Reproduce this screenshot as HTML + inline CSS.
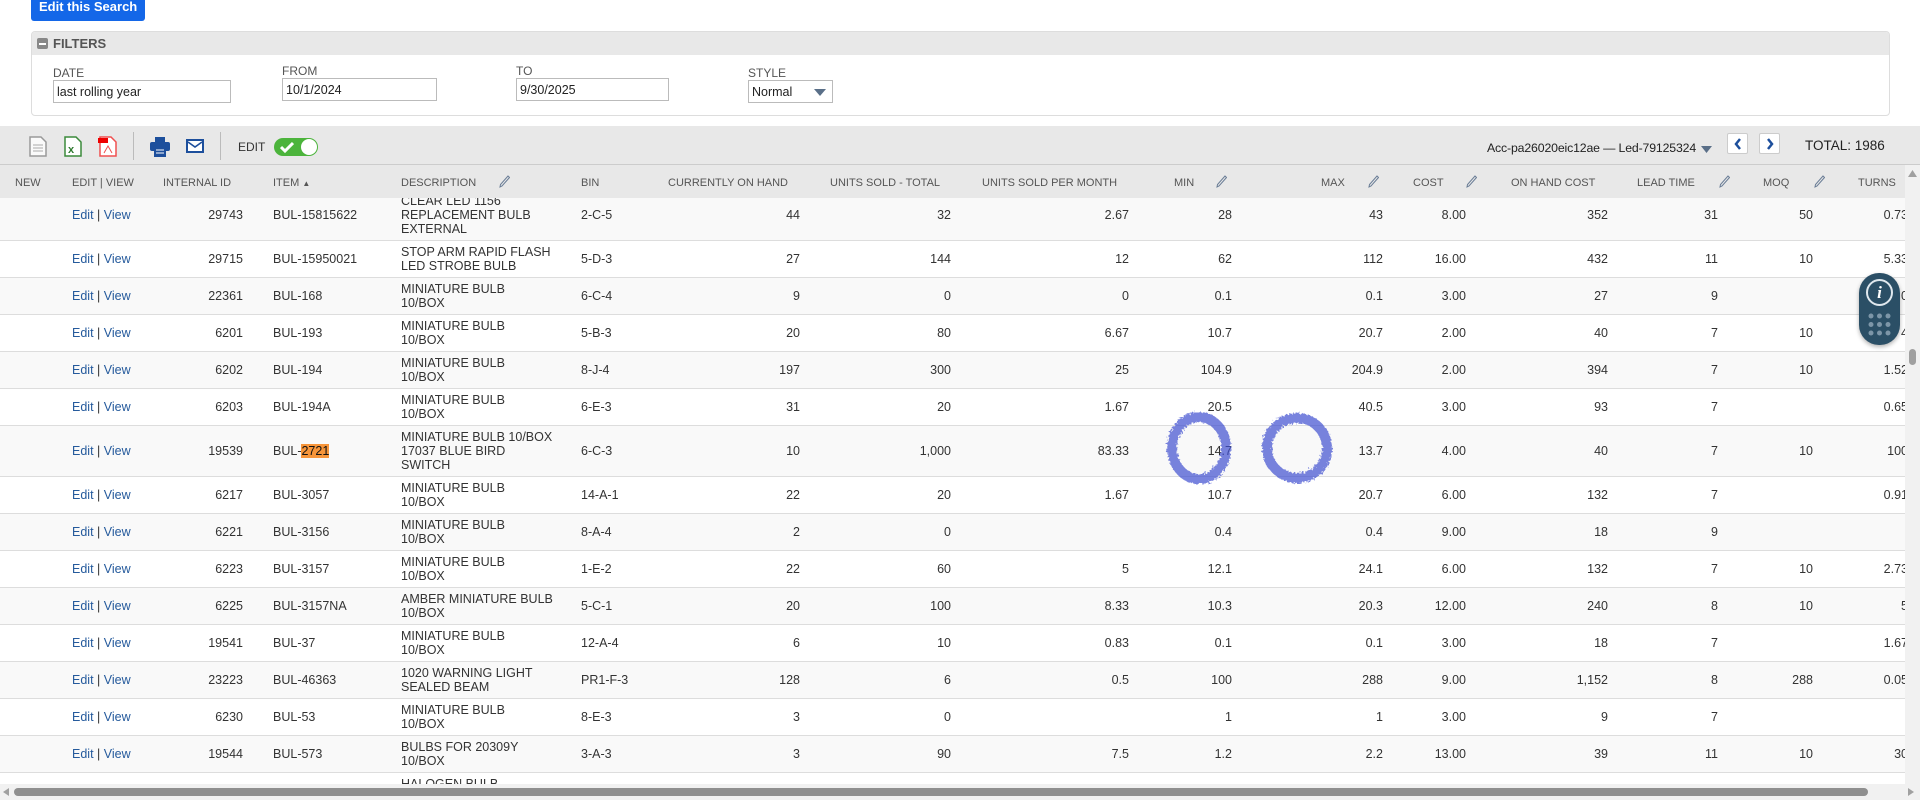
<!DOCTYPE html>
<html><head><meta charset="utf-8">
<style>
*{box-sizing:border-box;margin:0;padding:0}
body{width:1920px;height:800px;overflow:hidden;background:#fff;font-family:"Liberation Sans",Arial,sans-serif;color:#333;position:relative}
.abs{position:absolute}
#btn{left:31px;top:0;width:114px;height:21px;background:#1467e8;color:#fff;font-weight:bold;font-size:13px;line-height:14px;padding-left:8px;border-radius:0 0 3px 3px}
#filt{left:31px;top:31px;width:1859px;height:85px;border:1px solid #ddd;border-radius:4px;overflow:hidden}
#fh{height:23px;background:#e8e8e8;font-size:13px;font-weight:bold;color:#555;padding:4px 0 0 21px;position:relative}
#fh i{position:absolute;left:5px;top:6px;width:11px;height:11px;background:#888;border-radius:2px}
#fh i:after{content:"";position:absolute;left:2px;top:5px;width:7px;height:1.5px;background:#fff}
.lbl{font-size:12px;color:#555}
.inp{border:1px solid #bbb;height:23px;font-size:12.5px;padding:4px 3px;color:#222}
#tb{left:0;top:126px;width:1920px;height:39px;background:#e8e8e8;border-bottom:1px solid #ccc}
#hd{left:0;top:165px;width:1905px;height:33px;background:#e8e8e8;font-size:11px;color:#555}
#hd span{position:absolute;top:12px}
.pen{position:absolute;top:10px}
#body{left:0;top:198px;width:1905px;height:586px;overflow:hidden}
table{position:absolute;top:-8px;left:0;border-collapse:collapse;table-layout:fixed;width:1918px;font-size:12.5px}
td{padding:4px 12px;line-height:14px;border-bottom:1px solid #ddd;vertical-align:middle;white-space:nowrap;overflow:hidden}
tr:nth-child(odd) td{background:#f9f9f9}
td.r{text-align:right}
td.t{text-align:right;padding-right:10px}
a{color:#255a9c;text-decoration:none}
#vs{left:1905px;top:165px;width:15px;height:620px;background:#f1f1f1}
#hs{left:0;top:784px;width:1920px;height:16px;background:#f1f1f1}
</style></head><body>
<div id="btn" class="abs">Edit this Search</div>
<div id="filt" class="abs"><div id="fh"><i></i>FILTERS</div></div>
<div class="abs lbl" style="left:53px;top:66px">DATE</div>
<div class="abs inp" style="left:53px;top:80px;width:178px">last rolling year</div>
<div class="abs lbl" style="left:282px;top:64px">FROM</div>
<div class="abs inp" style="left:282px;top:78px;width:155px">10/1/2024</div>
<div class="abs lbl" style="left:516px;top:64px">TO</div>
<div class="abs inp" style="left:516px;top:78px;width:153px">9/30/2025</div>
<div class="abs lbl" style="left:748px;top:66px">STYLE</div>
<div class="abs inp" style="left:748px;top:80px;width:85px">Normal<svg style="position:absolute;right:6px;top:8px" width="12" height="7"><path d="M0 0H12L6 7Z" fill="#5a6f88"/></svg></div>

<div id="tb" class="abs">
<svg class="abs" style="left:29px;top:10px" width="18" height="21"><path d="M1 1H12L17 6V20H1Z" fill="#fafafa" stroke="#999" stroke-width="1.5"/><path d="M4 9H14M4 12H14M4 15H14" stroke="#aaa"/></svg>
<svg class="abs" style="left:64px;top:10px" width="18" height="21"><path d="M1 1H12L17 6V20H1Z" fill="#fff" stroke="#3b8a3b" stroke-width="1.5"/><text x="4" y="17" font-size="11" font-weight="bold" fill="#2f7a2f" font-family="Liberation Sans">x</text></svg>
<svg class="abs" style="left:98px;top:10px" width="19" height="21"><path d="M2 1H13L18 6V20H2Z" fill="#fff" stroke="#f05050" stroke-width="1.5"/><rect x="0" y="2" width="10" height="5" fill="#e00"/><path d="M6 17L10 10L14 17" stroke="#f05050" fill="none"/></svg>
<div class="abs" style="left:133px;top:6px;width:1px;height:28px;background:#bbb"></div>
<svg class="abs" style="left:150px;top:11px" width="20" height="20"><rect x="5" y="0" width="10" height="6" fill="#1d4f9c"/><rect x="0" y="5" width="20" height="9" rx="2" fill="#1d4f9c"/><rect x="4" y="10" width="12" height="10" fill="#1d4f9c"/><path d="M6 13H14M6 16H14" stroke="#fff"/></svg>
<svg class="abs" style="left:186px;top:13px" width="18" height="15"><rect x="1" y="1" width="16" height="12" fill="#fff" stroke="#1d4f9c" stroke-width="2"/><path d="M2 3L9 8L16 3" stroke="#1d4f9c" stroke-width="1.6" fill="none"/></svg>
<div class="abs" style="left:220px;top:6px;width:1px;height:28px;background:#bbb"></div>
<div class="abs" style="left:238px;top:14px;font-size:12px;color:#333">EDIT</div>
<div class="abs" style="left:274px;top:12px;width:44px;height:18px;border-radius:9px;background:#4cb43c"><svg class="abs" style="left:6px;top:3px" width="14" height="12"><path d="M1 6L5 10L13 2" stroke="#fff" stroke-width="3" fill="none"/></svg><div class="abs" style="right:1px;top:1px;width:16px;height:16px;border-radius:8px;background:#fff"></div></div>
<div class="abs" style="left:1487px;top:15px;font-size:12.3px;color:#222;white-space:nowrap;letter-spacing:-0.15px">Acc-pa26020eic12ae — Led-79125324</div>
<svg class="abs" style="left:1701px;top:20px" width="11" height="7"><path d="M0 0H11L5.5 7Z" fill="#5a6f88"/></svg>
<div class="abs" style="left:1727px;top:7px;width:21px;height:21px;background:#fff;border:1px solid #ccc;border-radius:2px"><svg class="abs" style="left:6px;top:4px" width="8" height="12"><path d="M6 1L2 6L6 11" stroke="#1d4f9c" stroke-width="2.5" fill="none"/></svg></div>
<div class="abs" style="left:1759px;top:7px;width:21px;height:21px;background:#fff;border:1px solid #ccc;border-radius:2px"><svg class="abs" style="left:6px;top:4px" width="8" height="12"><path d="M2 1L6 6L2 11" stroke="#1d4f9c" stroke-width="2.5" fill="none"/></svg></div>
<div class="abs" style="left:1805px;top:12px;font-size:13.5px;color:#222">TOTAL: 1986</div>
</div>

<div id="hd" class="abs">
<span style="left:15px">NEW</span><span style="left:72px">EDIT | VIEW</span><span style="left:163px">INTERNAL ID</span><span style="left:273px">ITEM <small style="font-size:8px">▲</small></span><span style="left:401px">DESCRIPTION</span><span style="left:581px">BIN</span><span style="left:668px">CURRENTLY ON HAND</span><span style="left:830px">UNITS SOLD - TOTAL</span><span style="left:982px">UNITS SOLD PER MONTH</span><span style="left:1174px">MIN</span><span style="left:1321px">MAX</span><span style="left:1413px">COST</span><span style="left:1511px">ON HAND COST</span><span style="left:1637px">LEAD TIME</span><span style="left:1763px">MOQ</span><span style="left:1858px">TURNS</span>
<svg class="pen" style="left:499px" width="11" height="13"><path d="M9 1L10.5 2.5L3 11L1 12L1.5 9.5Z" stroke="#6a7d96" fill="none"/></svg>
<svg class="pen" style="left:1216px" width="11" height="13"><path d="M9 1L10.5 2.5L3 11L1 12L1.5 9.5Z" stroke="#6a7d96" fill="none"/></svg>
<svg class="pen" style="left:1368px" width="11" height="13"><path d="M9 1L10.5 2.5L3 11L1 12L1.5 9.5Z" stroke="#6a7d96" fill="none"/></svg>
<svg class="pen" style="left:1466px" width="11" height="13"><path d="M9 1L10.5 2.5L3 11L1 12L1.5 9.5Z" stroke="#6a7d96" fill="none"/></svg>
<svg class="pen" style="left:1719px" width="11" height="13"><path d="M9 1L10.5 2.5L3 11L1 12L1.5 9.5Z" stroke="#6a7d96" fill="none"/></svg>
<svg class="pen" style="left:1814px" width="11" height="13"><path d="M9 1L10.5 2.5L3 11L1 12L1.5 9.5Z" stroke="#6a7d96" fill="none"/></svg>
</div>

<div id="body" class="abs">
<table>
<colgroup><col style="width:60px"><col style="width:91px"><col style="width:110px"><col style="width:128px"><col style="width:180px"><col style="width:86px"><col style="width:157px"><col style="width:151px"><col style="width:178px"><col style="width:103px"><col style="width:151px"><col style="width:83px"><col style="width:142px"><col style="width:110px"><col style="width:95px"><col style="width:93px"></colgroup>
<tr><td></td><td><a>Edit</a> | <a>View</a></td><td class="r" style="padding-right:18px">29743</td><td>BUL-15815622</td><td>CLEAR LED 1156<br>REPLACEMENT BULB<br>EXTERNAL</td><td>2-C-5</td><td class="r">44</td><td class="r">32</td><td class="r">2.67</td><td class="r">28</td><td class="r">43</td><td class="r">8.00</td><td class="r">352</td><td class="r">31</td><td class="r">50</td><td class="t">0.73</td></tr>
<tr><td></td><td><a>Edit</a> | <a>View</a></td><td class="r" style="padding-right:18px">29715</td><td>BUL-15950021</td><td>STOP ARM RAPID FLASH<br>LED STROBE BULB</td><td>5-D-3</td><td class="r">27</td><td class="r">144</td><td class="r">12</td><td class="r">62</td><td class="r">112</td><td class="r">16.00</td><td class="r">432</td><td class="r">11</td><td class="r">10</td><td class="t">5.33</td></tr>
<tr><td></td><td><a>Edit</a> | <a>View</a></td><td class="r" style="padding-right:18px">22361</td><td>BUL-168</td><td>MINIATURE BULB<br>10/BOX</td><td>6-C-4</td><td class="r">9</td><td class="r">0</td><td class="r">0</td><td class="r">0.1</td><td class="r">0.1</td><td class="r">3.00</td><td class="r">27</td><td class="r">9</td><td class="r"></td><td class="t">0</td></tr>
<tr><td></td><td><a>Edit</a> | <a>View</a></td><td class="r" style="padding-right:18px">6201</td><td>BUL-193</td><td>MINIATURE BULB<br>10/BOX</td><td>5-B-3</td><td class="r">20</td><td class="r">80</td><td class="r">6.67</td><td class="r">10.7</td><td class="r">20.7</td><td class="r">2.00</td><td class="r">40</td><td class="r">7</td><td class="r">10</td><td class="t">4</td></tr>
<tr><td></td><td><a>Edit</a> | <a>View</a></td><td class="r" style="padding-right:18px">6202</td><td>BUL-194</td><td>MINIATURE BULB<br>10/BOX</td><td>8-J-4</td><td class="r">197</td><td class="r">300</td><td class="r">25</td><td class="r">104.9</td><td class="r">204.9</td><td class="r">2.00</td><td class="r">394</td><td class="r">7</td><td class="r">10</td><td class="t">1.52</td></tr>
<tr><td></td><td><a>Edit</a> | <a>View</a></td><td class="r" style="padding-right:18px">6203</td><td>BUL-194A</td><td>MINIATURE BULB<br>10/BOX</td><td>6-E-3</td><td class="r">31</td><td class="r">20</td><td class="r">1.67</td><td class="r">20.5</td><td class="r">40.5</td><td class="r">3.00</td><td class="r">93</td><td class="r">7</td><td class="r"></td><td class="t">0.65</td></tr>
<tr><td></td><td><a>Edit</a> | <a>View</a></td><td class="r" style="padding-right:18px">19539</td><td>BUL-<span style="background:#f7953a;color:#111">2721</span></td><td>MINIATURE BULB 10/BOX<br>17037 BLUE BIRD<br>SWITCH</td><td>6-C-3</td><td class="r">10</td><td class="r">1,000</td><td class="r">83.33</td><td class="r">14.7</td><td class="r">13.7</td><td class="r">4.00</td><td class="r">40</td><td class="r">7</td><td class="r">10</td><td class="t">100</td></tr>
<tr><td></td><td><a>Edit</a> | <a>View</a></td><td class="r" style="padding-right:18px">6217</td><td>BUL-3057</td><td>MINIATURE BULB<br>10/BOX</td><td>14-A-1</td><td class="r">22</td><td class="r">20</td><td class="r">1.67</td><td class="r">10.7</td><td class="r">20.7</td><td class="r">6.00</td><td class="r">132</td><td class="r">7</td><td class="r"></td><td class="t">0.91</td></tr>
<tr><td></td><td><a>Edit</a> | <a>View</a></td><td class="r" style="padding-right:18px">6221</td><td>BUL-3156</td><td>MINIATURE BULB<br>10/BOX</td><td>8-A-4</td><td class="r">2</td><td class="r">0</td><td class="r"></td><td class="r">0.4</td><td class="r">0.4</td><td class="r">9.00</td><td class="r">18</td><td class="r">9</td><td class="r"></td><td class="t"></td></tr>
<tr><td></td><td><a>Edit</a> | <a>View</a></td><td class="r" style="padding-right:18px">6223</td><td>BUL-3157</td><td>MINIATURE BULB<br>10/BOX</td><td>1-E-2</td><td class="r">22</td><td class="r">60</td><td class="r">5</td><td class="r">12.1</td><td class="r">24.1</td><td class="r">6.00</td><td class="r">132</td><td class="r">7</td><td class="r">10</td><td class="t">2.73</td></tr>
<tr><td></td><td><a>Edit</a> | <a>View</a></td><td class="r" style="padding-right:18px">6225</td><td>BUL-3157NA</td><td>AMBER MINIATURE BULB<br>10/BOX</td><td>5-C-1</td><td class="r">20</td><td class="r">100</td><td class="r">8.33</td><td class="r">10.3</td><td class="r">20.3</td><td class="r">12.00</td><td class="r">240</td><td class="r">8</td><td class="r">10</td><td class="t">5</td></tr>
<tr><td></td><td><a>Edit</a> | <a>View</a></td><td class="r" style="padding-right:18px">19541</td><td>BUL-37</td><td>MINIATURE BULB<br>10/BOX</td><td>12-A-4</td><td class="r">6</td><td class="r">10</td><td class="r">0.83</td><td class="r">0.1</td><td class="r">0.1</td><td class="r">3.00</td><td class="r">18</td><td class="r">7</td><td class="r"></td><td class="t">1.67</td></tr>
<tr><td></td><td><a>Edit</a> | <a>View</a></td><td class="r" style="padding-right:18px">23223</td><td>BUL-46363</td><td>1020 WARNING LIGHT<br>SEALED BEAM</td><td>PR1-F-3</td><td class="r">128</td><td class="r">6</td><td class="r">0.5</td><td class="r">100</td><td class="r">288</td><td class="r">9.00</td><td class="r">1,152</td><td class="r">8</td><td class="r">288</td><td class="t">0.05</td></tr>
<tr><td></td><td><a>Edit</a> | <a>View</a></td><td class="r" style="padding-right:18px">6230</td><td>BUL-53</td><td>MINIATURE BULB<br>10/BOX</td><td>8-E-3</td><td class="r">3</td><td class="r">0</td><td class="r"></td><td class="r">1</td><td class="r">1</td><td class="r">3.00</td><td class="r">9</td><td class="r">7</td><td class="r"></td><td class="t"></td></tr>
<tr><td></td><td><a>Edit</a> | <a>View</a></td><td class="r" style="padding-right:18px">19544</td><td>BUL-573</td><td>BULBS FOR 20309Y<br>10/BOX</td><td>3-A-3</td><td class="r">3</td><td class="r">90</td><td class="r">7.5</td><td class="r">1.2</td><td class="r">2.2</td><td class="r">13.00</td><td class="r">39</td><td class="r">11</td><td class="r">10</td><td class="t">30</td></tr>
<tr><td></td><td><a>Edit</a> | <a>View</a></td><td class="r" style="padding-right:18px">6343</td><td>BUL-906</td><td>HALOGEN BULB<br>10/BOX</td><td>15-A-6</td><td class="r">2</td><td class="r">1</td><td class="r">0.08</td><td class="r">1</td><td class="r">1</td><td class="r">4.00</td><td class="r">12</td><td class="r">7</td><td class="r"></td><td class="t">0.08</td></tr>
</table>
</div>

<svg class="abs" style="left:1160px;top:405px" width="180" height="90">
<defs><filter id="rough"><feTurbulence type="fractalNoise" baseFrequency="0.5" numOctaves="2" result="n"/><feDisplacementMap in="SourceGraphic" in2="n" scale="6"/></filter></defs>
<g fill="none" stroke="#3f4fd0" stroke-opacity="0.7" stroke-width="10" filter="url(#rough)">
<ellipse cx="39" cy="43" rx="27" ry="31"/>
<ellipse cx="137" cy="43" rx="30" ry="30"/>
</g></svg>

<div id="vs" class="abs"><svg class="abs" style="left:3px;top:5px" width="9" height="7"><path d="M0 7H9L4.5 0Z" fill="#a0a0a0"/></svg><div class="abs" style="left:4px;top:184px;width:7px;height:16px;border-radius:4px;background:#a0a0a0"></div></div>
<div id="hs" class="abs"><svg class="abs" style="left:3px;top:4px" width="6" height="8"><path d="M6 0V8L0 4Z" fill="#a0a0a0"/></svg><div class="abs" style="left:14px;top:4px;width:1854px;height:8px;border-radius:4px;background:#8f8f8f"></div><svg class="abs" style="left:1908px;top:4px" width="6" height="8"><path d="M0 0V8L6 4Z" fill="#a0a0a0"/></svg></div>

<div class="abs" style="left:1859px;top:273px;width:41px;height:72px;border-radius:20px;background:#2b4f66;box-shadow:0 2px 4px rgba(0,0,0,.3)">
<div class="abs" style="left:7px;top:6px;width:27px;height:27px;border:2px solid #e0e8ee;border-radius:50%;color:#fff;font-family:'Liberation Serif',serif;font-style:italic;font-weight:bold;font-size:17px;text-align:center;line-height:23px">i</div>
<svg class="abs" style="left:9px;top:40px" width="23" height="23" fill="#7d96a8"><circle cx="3" cy="3" r="2.5"/><circle cx="11.5" cy="3" r="2.5"/><circle cx="20" cy="3" r="2.5"/><circle cx="3" cy="11.5" r="2.5"/><circle cx="11.5" cy="11.5" r="2.5"/><circle cx="20" cy="11.5" r="2.5"/><circle cx="3" cy="20" r="2.5"/><circle cx="11.5" cy="20" r="2.5"/><circle cx="20" cy="20" r="2.5"/></svg>
</div>
</body></html>
